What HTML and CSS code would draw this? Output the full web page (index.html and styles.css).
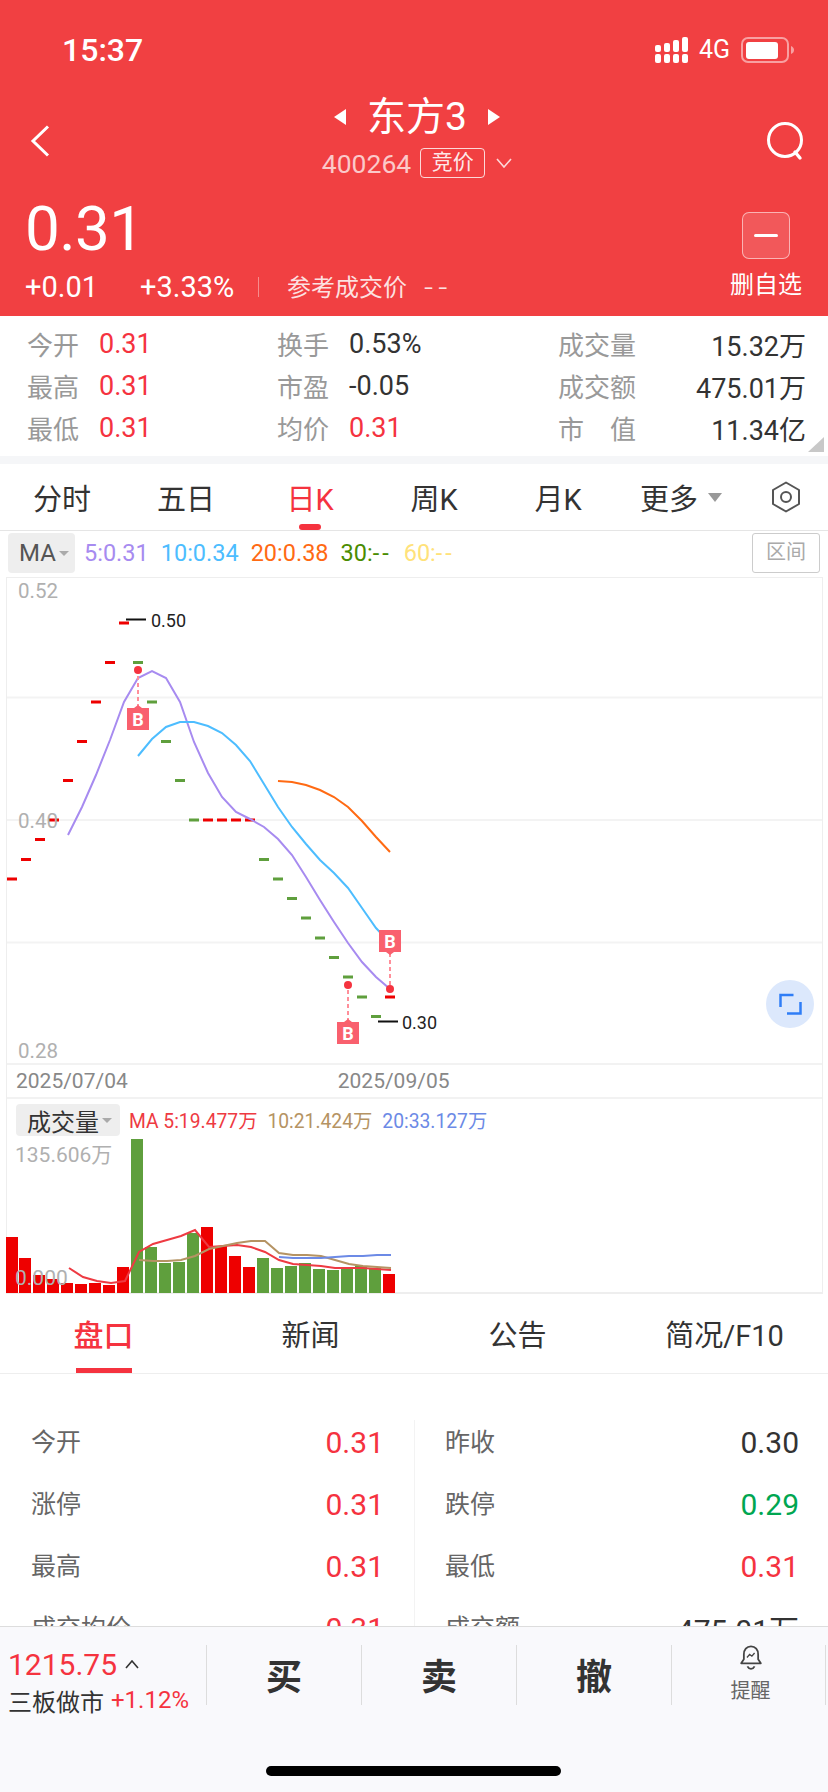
FILE: index.html
```html
<!DOCTYPE html>
<html lang="zh-CN">
<head>
    <meta charset="UTF-8">
    <meta name="viewport" content="width=device-width, initial-scale=1.0">
    <title>东方3</title>
    <link rel="stylesheet" href="styles.css">
</head>
<body>
<div class="main">

    <header class="head">
        <div class="status">
            <span class="time">15:37</span>
            <div class="status-right">
                <svg width="33" height="26" viewBox="0 0 33 26" fill="#fff">
                    <rect x="0" y="17" width="6" height="9" rx="2"/><rect x="9" y="17" width="6" height="9" rx="2"/><rect x="18" y="17" width="6" height="9" rx="2"/><rect x="27" y="17" width="6" height="9" rx="2"/>
                    <rect x="0" y="8" width="6" height="7" rx="2"/><rect x="9" y="6" width="6" height="9" rx="2"/><rect x="18" y="3" width="6" height="12" rx="2"/><rect x="27" y="0" width="6" height="15" rx="2"/>
                </svg>
                <span class="net">4G</span>
                <svg width="53" height="26" viewBox="0 0 53 26">
                    <rect x="1" y="1" width="46" height="24" rx="6" fill="none" stroke="#fff" stroke-opacity=".5" stroke-width="2"/>
                    <rect x="5" y="5" width="32" height="17" rx="3" fill="#fff"/>
                    <path d="M50 9c2 1 3 2 3 4s-1 3-3 4z" fill="#fff" fill-opacity=".5"/>
                </svg>
            </div>
        </div>

        <div class="nav">
            <svg class="back" width="20" height="32" viewBox="0 0 20 32"><path d="M18 1.500 3 16l15 14.500" fill="none" stroke="#fff" stroke-width="3"/></svg>
            <div class="nav-mid">
                <div class="title-line">
                    <span class="arrow arrow-l"></span>
                    <span class="title">东方3</span>
                    <span class="arrow arrow-r"></span>
                </div>
                <div class="code-line">
                    <span class="code">400264</span>
                    <span class="tag">竞价</span>
                    <svg width="16" height="10" viewBox="0 0 16 10"><path d="M1 1l7 8 7-8" fill="none" stroke="#fff" stroke-opacity=".8" stroke-width="1.600"/></svg>
                </div>
            </div>
            <svg class="search" width="40" height="40" viewBox="0 0 40 40"><circle cx="20" cy="19" r="16.500" fill="none" stroke="#fff" stroke-width="3"/><path d="M30 31l5 6" stroke="#fff" stroke-width="3.400" stroke-linecap="round"/></svg>
        </div>

        <div class="quote">
            <div class="quote-left">
                <div class="price">0.31</div>
                <div class="sub">
                    <span class="chg">+0.01</span>
                    <span class="pct">+3.33%</span>
                    <span class="sub-line"></span>
                    <span class="ref">参考成交价</span>
                    <span class="ref-val">--</span>
                </div>
            </div>
            <div class="fav">
                <div class="fav-btn"><span></span></div>
                <div class="fav-text">删自选</div>
            </div>
        </div>
    </header>

    <section class="stats">
        <div class="stat"><span class="lb">今开</span><span class="red">0.31</span></div>
        <div class="stat"><span class="lb">换手</span><span class="dark">0.53%</span></div>
        <div class="stat wide"><span class="lb">成交量</span><span class="dark">15.32万</span></div>
        <div class="stat"><span class="lb">最高</span><span class="red">0.31</span></div>
        <div class="stat"><span class="lb">市盈</span><span class="dark">-0.05</span></div>
        <div class="stat wide"><span class="lb">成交额</span><span class="dark">475.01万</span></div>
        <div class="stat"><span class="lb">最低</span><span class="red">0.31</span></div>
        <div class="stat"><span class="lb">均价</span><span class="red">0.31</span></div>
        <div class="stat wide"><span class="lb spread"><i>市</i><i>值</i></span><span class="dark">11.34亿</span></div>
        <span class="corner"></span>
    </section>

    <nav class="ktabs">
        <span>分时</span>
        <span>五日</span>
        <span class="on">日K</span>
        <span>周K</span>
        <span>月K</span>
        <span class="more">更多<i class="tri-big"></i></span>
        <svg width="30" height="32" viewBox="0 0 30 32" fill="none" stroke="#555" stroke-width="2"><path d="M15 1.500 28 9v14l-13 7.500L2 23V9z" stroke-linejoin="round"/><circle cx="15" cy="16" r="5"/></svg>
    </nav>

    <div class="ma-row">
        <span class="ma-btn">MA<i class="tri"></i></span>
        <span class="c-purple">5:0.31</span>
        <span class="c-blue">10:0.34</span>
        <span class="c-orange">20:0.38</span>
        <span class="c-green">30:<i class="dd">--</i></span>
        <span class="c-yellow">60:<i class="dd">--</i></span>
        <span class="range">区间</span>
    </div>

    <div class="chart">
        <svg class="kline" width="815" height="487" viewBox="7 578 815 485">
            <path class="grid" d="M7 697.500H822M7 820H822M7 942.500H822"/>
            <path class="up" d="M7 879h10M21 859.500h10M35 839.500h10M49 820h10M63 780.500h10M77 741.500h10M91 702h10M105 662.500h10M119 623h10M203 820h10M217 820h10M231 820h10M245 820h10M385 997h10"/>
            <path class="down" d="M133 662.500h10M147 702h10M161 741.500h10M175 780.500h10M189 820h10M259 859.500h10M273 879h10M287 898.500h10M301 918h10M315 938h10M329 957.500h10M343 977h10M357 997h10M371 1016.500h10"/>
            <polyline class="ma ma5" points="68,835 82,807 96,775 110,740 124,702 138,678 152,671 166,678 180,702 194,742 208,773 222,797 236,812 250,819 264,827 278,839 292,855 306,877 320,900 334,922 348,943 362,962 376,977 390,989"/>
            <polyline class="ma ma10" points="138,756 152,739 166,727 180,722 194,722 208,726 222,733 236,745 250,761 264,784 278,807 292,827 306,844 320,860 334,873 348,888 362,908 376,928 390,943"/>
            <polyline class="ma ma20" points="278,781 292,782 306,785 320,790 334,797 348,807 362,821 376,837 390,852"/>

            <path class="leader" d="M126 619.500h20M378 1021.500h20"/>
            <text class="peak" x="151" y="627">0.50</text>
            <text class="peak" x="402" y="1029">0.30</text>

            <text class="axis" x="18" y="598">0.52</text>
            <text class="axis" x="18" y="828">0.40</text>
            <text class="axis" x="18" y="1058">0.28</text>

            <path class="dash" d="M138 676v30M390 953v32M348 990v30"/>
            <circle class="dot" cx="138" cy="670" r="4"/>
            <circle class="dot" cx="390" cy="989" r="4"/>
            <circle class="dot" cx="348" cy="985" r="4"/>
            <g class="badge">
                <path d="M127 708h7l4-3 4 3h7v22h-22z"/>
                <path d="M379 930h22v22h-7l-4 3-4-3h-7z"/>
                <path d="M337 1022h7l4-3 4 3h7v22h-22z"/>
            </g>
            <text class="badge-b" x="138" y="726">B</text>
            <text class="badge-b" x="390" y="948">B</text>
            <text class="badge-b" x="348" y="1040">B</text>

            <circle cx="790" cy="1004" r="24" fill="#dce8fc"/>
            <path d="M793.500 995h-13v12M787 1013.500h13.500V1002" fill="none" stroke="#2f7df6" stroke-width="2.500"/>
        </svg>
        <div class="dates">
            <span>2025/07/04</span>
            <span>2025/09/05</span>
        </div>
        <div class="vol-head">
            <span class="vol-btn">成交量<i class="tri"></i></span>
            <span class="c-red">MA 5:19.477万</span>
            <span class="c-brown">10:21.424万</span>
            <span class="c-steel">20:33.127万</span>
        </div>
        <svg class="vol" width="815" height="157" viewBox="7 1137 815 155">
            <path class="bar-up" d="M12 1293V1237M25 1293V1258M39 1293V1275M53 1293V1279M67 1293V1283M81 1293V1284M95 1293V1283M109 1293V1285M123 1293V1267M207 1293V1227M221 1293V1246M235 1293V1256M249 1293V1267M389 1293V1274"/>
            <path class="bar-down" d="M137 1293V1139M151 1293V1247M165 1293V1263M179 1293V1262M193 1293V1233M263 1293V1258M277 1293V1268M291 1293V1266M305 1293V1263M319 1293V1269M333 1293V1270M347 1293V1268M361 1293V1266M375 1293V1268"/>
            <text class="axis axis-vol" x="15" y="1162">135.606万</text>
            <text class="axis axis-vol" x="15" y="1285">0.000</text>
            <polyline class="vline v-red" points="69,1268 83,1277 97,1281 111,1283 125,1281 139,1252 153,1244 167,1240 181,1236 195,1230 209,1247 223,1246 237,1245 251,1247 265,1252 279,1260 293,1264 307,1265 321,1266 335,1268 349,1268 363,1268 377,1269 391,1270"/>
            <polyline class="vline v-brown" points="139,1260 153,1261 167,1261 181,1260 195,1256 209,1249 223,1246 237,1243 251,1241 265,1241 279,1253 293,1255 307,1255 321,1256 335,1260 349,1264 363,1266 377,1267 391,1268"/>
            <polyline class="vline v-steel" points="279,1257 293,1258 307,1258 321,1258 335,1257 349,1256 363,1256 377,1255 391,1255"/>
        </svg>
    </div>

    <nav class="ntabs">
        <span class="on">盘口</span>
        <span>新闻</span>
        <span>公告</span>
        <span>简况/F10</span>
    </nav>

    <section class="book">
        <div class="cell"><span>今开</span><b class="red">0.31</b></div>
        <div class="cell"><span>昨收</span><b class="dark">0.30</b></div>
        <div class="cell"><span>涨停</span><b class="red">0.31</b></div>
        <div class="cell"><span>跌停</span><b class="green">0.29</b></div>
        <div class="cell"><span>最高</span><b class="red">0.31</b></div>
        <div class="cell"><span>最低</span><b class="red">0.31</b></div>
        <div class="cell"><span>成交均价</span><b class="red">0.31</b></div>
        <div class="cell"><span>成交额</span><b class="dark">475.01万</b></div>
    </section>
</div>

<footer class="bar">
    <div class="bar-row">
        <div class="index">
            <div class="index-top"><span class="index-num">1215.75</span><svg width="14" height="9" viewBox="0 0 14 9"><path d="M1 8l6-7 6 7" fill="none" stroke="#333" stroke-width="1.600"/></svg></div>
            <div class="index-sub"><span>三板做市</span><span class="index-pct">+1.12%</span></div>
        </div>
        <div class="act">买</div>
        <div class="act">卖</div>
        <div class="act">撤</div>
        <div class="act remind">
            <svg width="26" height="28" viewBox="0 0 26 28" fill="none" stroke="#444" stroke-width="2"><path d="M13 1.500c-5 0-8 4-8 9v5.500l-3 4.500h22l-3-4.500v-5.500c0-5-3-9-8-9z" stroke-linejoin="round"/><path d="M9 24c1 2 2.500 2.800 4 2.800s3-.8 4-2.800"/><path d="M8.500 14l3-3.500 2.500 2 3-3.500" stroke-width="1.500"/></svg>
            <span>提醒</span>
        </div>
    </div>
    <div class="home"></div>
</footer>
</body>
</html>
```

FILE: styles.css
```css
* {
    box-sizing: border-box;
}
body {
    margin: 0;
    width: 828px;
    height: 1792px;
    overflow: hidden;
    display: flex;
    flex-direction: column;
    background: #fff;
    color: #333;
    font-family: Roboto, "Noto Sans CJK SC", sans-serif;
}
i {
    font-style: normal;
}
svg {
    display: block;
}
.main {
    height: 1626px;
    overflow: hidden;
    flex: none;
}
.red { color: #f5333f; }
.dark { color: #333; }
.green { color: #00a651; }

/* red header */
.head {
    height: 316px;
    background: #f14042;
    color: #fff;
}
.status {
    height: 91px;
    padding: 8px 34px 0 62px;
    display: flex;
    justify-content: space-between;
    align-items: center;
}
.time {
    font-size: 32px;
    font-weight: 500;
}
.status-right {
    display: flex;
    align-items: center;
    gap: 11px;
}
.net {
    font-size: 25px;
    width: 31px;
}
.nav {
    height: 100px;
    padding: 0 23px 0 30px;
    display: flex;
    justify-content: space-between;
    align-items: center;
}
.nav-mid {
    align-self: flex-start;
    margin: 3px 0 0 19px;
}
.title-line {
    height: 46px;
    display: flex;
    justify-content: center;
    align-items: center;
    gap: 21px;
}
.title {
    font-size: 39px;
    line-height: 46px;
}
.arrow {
    width: 0;
    height: 0;
    border-top: 8px solid transparent;
    border-bottom: 8px solid transparent;
}
.arrow-l { border-right: 12px solid #fff; }
.arrow-r { border-left: 12px solid #fff; }
.code-line {
    height: 42px;
    display: flex;
    justify-content: center;
    align-items: center;
    gap: 9px;
    margin-top: 2px;
}
.code {
    font-size: 26.500px;
    color: rgba(255, 255, 255, .72);
}
.tag {
    width: 65px;
    height: 30px;
    line-height: 27px;
    border: 1px solid rgba(255, 255, 255, .8);
    border-radius: 4px;
    font-size: 21px;
    text-align: center;
    margin-right: 2px;
    color: rgba(255, 255, 255, .9);
}
.quote {
    height: 125px;
    padding: 0 26px 0 25px;
    display: flex;
    justify-content: space-between;
}
.price {
    height: 71px;
    line-height: 75px;
    font-size: 62px;
    letter-spacing: -.6px;
}
.sub {
    height: 50px;
    display: flex;
    align-items: center;
    font-size: 29px;
}
.chg {
    width: 115px;
}
.pct {
    width: 118px;
}
.sub-line {
    width: 1px;
    height: 20px;
    background: rgba(255, 255, 255, .4);
    margin-right: 28px;
}
.ref {
    font-size: 24px;
    color: rgba(255, 255, 255, .85);
    margin: -4px 17px 0 0;
}
.ref-val {
    font-size: 32px;
    font-weight: 300;
    letter-spacing: 5px;
    color: rgba(255, 255, 255, .85);
}
.fav {
    width: 72px;
    padding-top: 21px;
}
.fav-btn {
    width: 48px;
    height: 47px;
    margin: 0 auto 12px;
    border: 1px solid rgba(255, 255, 255, .55);
    border-radius: 7px;
    background: rgba(255, 255, 255, .13);
    display: flex;
    align-items: center;
    justify-content: center;
}
.fav-btn span {
    width: 24px;
    height: 3px;
    background: #fff;
    border-radius: 2px;
}
.fav-text {
    font-size: 24px;
    line-height: 28px;
    white-space: nowrap;
}

/* stats block */
.stats {
    position: relative;
    height: 148px;
    padding: 7px 22px 0 27px;
    display: grid;
    grid-template-columns: 250px 281px 248px;
    grid-auto-rows: 42px;
    border-bottom: 8px solid #f5f6f8;
}
.stat {
    display: flex;
    align-items: center;
    font-size: 27px;
}
.lb {
    width: 72px;
    color: #999;
    font-size: 26px;
    margin-top: -2px;
}
.wide {
    justify-content: space-between;
}
.wide .lb {
    width: 78px;
}
.spread {
    display: flex;
    justify-content: space-between;
}
.corner {
    position: absolute;
    left: 808px;
    top: 121px;
    width: 16px;
    height: 15px;
    background: #c8c8c8;
    clip-path: polygon(100% 0, 100% 100%, 0 100%);
}

/* k line tabs */
.ktabs {
    height: 67px;
    display: grid;
    grid-template-columns: 124px 124px 124px 124px 124px 124px 84px;
    align-items: center;
    justify-items: center;
    font-size: 29px;
    color: #333;
    border-bottom: 1px solid #e5e5e5;
}
.ktabs span {
    position: relative;
    display: flex;
    align-items: center;
    height: 66px;
}
.ktabs .on {
    color: #f5333f;
}
.ktabs .on::after {
    content: "";
    position: absolute;
    left: 50%;
    bottom: 0;
    width: 22px;
    height: 6px;
    margin-left: -11px;
    border-radius: 3px;
    background: #f5333f;
}
.more {
    margin-left: -2px;
}
.tri-big {
    margin-left: 10px;
    border-top: 9px solid #999;
    border-left: 7.500px solid transparent;
    border-right: 7.500px solid transparent;
}
.tri {
    margin-left: 3px;
    border-top: 5px solid #aaa;
    border-left: 5px solid transparent;
    border-right: 5px solid transparent;
}

/* MA row */
.ma-row {
    height: 46px;
    padding: 2px 8px 4px;
    display: flex;
    align-items: center;
    gap: 12px;
    font-size: 23.500px;
}
.dd {
    letter-spacing: 3px;
}
.ma-btn {
    width: 67px;
    height: 40px;
    padding-left: 11px;
    margin-right: -3px;
    display: flex;
    align-items: center;
    background: #eee;
    border-radius: 4px;
    color: #555;
    font-size: 24px;
}
.c-purple { color: #a78bf0; }
.c-blue { color: #4dbdff; }
.c-orange { color: #ff6a13; }
.c-green { color: #4a8c00; }
.c-yellow { color: #ffe27a; }
.c-red { color: #ee3a42; }
.c-brown { color: #b59363; }
.c-steel { color: #6c8ae6; }
.range {
    margin-left: auto;
    width: 68px;
    height: 40px;
    line-height: 37px;
    text-align: center;
    border: 1px solid #ccc;
    border-radius: 3px;
    font-size: 20px;
    color: #aaa;
}

/* chart */
.chart {
    margin: 0 5px 0 6px;
    border-left: 1px solid #eee;
    border-right: 1px solid #eee;
    border-top: 1px solid #eee;
}
.kline {
    overflow: visible;
    border-bottom: 2px solid #f2f2f2;
}
.grid {
    stroke: #f3f3f3;
    stroke-width: 2;
}
.up, .down {
    stroke-width: 3;
    fill: none;
}
.up { stroke: #ee0000; }
.down { stroke: #5f9f3d; }
.ma {
    fill: none;
    stroke-width: 2;
}
.ma5 { stroke: #a78bf0; }
.ma10 { stroke: #4dbdff; }
.ma20 { stroke: #ff6a13; }
.leader {
    stroke: #111;
    stroke-width: 2;
}
.peak {
    font-size: 18px;
    fill: #222;
}
.axis {
    font-size: 20.500px;
    fill: #b0b0b0;
}
.axis-vol {
    font-size: 21px;
}
.dash {
    stroke: #ff8f9a;
    stroke-width: 2;
    stroke-dasharray: 4 3;
}
.dot {
    fill: #f5333f;
}
.badge {
    fill: #f9606e;
}
.badge-b {
    font-size: 18px;
    font-weight: 700;
    fill: #fff;
    text-anchor: middle;
}
.dates {
    height: 34px;
    padding: 0 0 0 9px;
    display: flex;
    align-items: center;
    gap: 210px;
    font-size: 21px;
    color: #888;
    border-bottom: 2px solid #f2f2f2;
}
.vol-head {
    height: 38px;
    padding: 4px 0 0 9px;
    display: flex;
    align-items: center;
    gap: 10px;
    font-size: 19.300px;
}
.vol-btn {
    width: 104px;
    height: 32px;
    padding-left: 11px;
    margin-right: -1px;
    display: flex;
    align-items: center;
    background: #eee;
    border-radius: 4px;
    color: #333;
    font-size: 24px;
}
.vol {
    overflow: visible;
    border-bottom: 2px solid #eee;
}
.bar-up, .bar-down {
    stroke-width: 12;
    fill: none;
}
.bar-up { stroke: #ee0000; }
.bar-down { stroke: #5f9f3d; }
.vline {
    fill: none;
    stroke-width: 2;
}
.v-red { stroke: #ee3a42; }
.v-brown { stroke: #b59363; }
.v-steel { stroke: #6c8ae6; }

/* lower tabs */
.ntabs {
    height: 80px;
    display: grid;
    grid-template-columns: repeat(4, 207px);
    justify-items: center;
    font-size: 29px;
    color: #333;
    border-bottom: 1px solid #eee;
}
.ntabs span {
    position: relative;
    display: flex;
    align-items: center;
    padding-bottom: 2px;
}
.ntabs .on {
    color: #f5333f;
    font-weight: 500;
    font-size: 30px;
}
.ntabs .on::after {
    content: "";
    position: absolute;
    left: 2px;
    right: 2px;
    bottom: 0;
    height: 5px;
    background: #f5333f;
}

/* order book */
.book {
    position: relative;
    margin-top: 36px;
    display: grid;
    grid-template-columns: 414px 414px;
    grid-auto-rows: 62px;
}
.book::before {
    content: "";
    position: absolute;
    left: 414px;
    top: 10px;
    bottom: 0;
    width: 1px;
    background: #f3f3f3;
}
.cell {
    display: flex;
    align-items: center;
    justify-content: space-between;
    padding: 0 30px 0 31px;
    font-size: 25px;
    color: #666;
}
.cell span {
    margin-top: -2px;
}
.cell:nth-child(even) {
    padding: 0 29px 0 31px;
}
.cell b {
    font-weight: 400;
    font-size: 30px;
    margin-top: 2px;
}

/* bottom bar */
.bar {
    flex: 1;
    background: #f9f9fc;
    border-top: 1px solid #ddd;
    padding-top: 18px;
}
.bar-row {
    height: 60px;
    display: flex;
}
.index {
    width: 206px;
    padding-left: 8px;
    white-space: nowrap;
}
.index-top {
    height: 36px;
    margin-top: 1px;
    display: flex;
    align-items: center;
    gap: 8px;
}
.index-num {
    font-size: 30px;
    color: #f5333f;
}
.index-sub {
    height: 36px;
    display: flex;
    align-items: center;
    gap: 7px;
    font-size: 24px;
    color: #333;
}
.index-pct {
    color: #f5333f;
    font-size: 24px;
}
.act {
    width: 155px;
    padding-bottom: 2px;
    border-left: 1px solid #ddd;
    display: flex;
    align-items: center;
    justify-content: center;
    font-size: 36px;
    font-weight: 700;
    color: #333;
}
.remind {
    flex-direction: column;
    justify-content: flex-start;
    padding: 0 0 0 4px;
    border-right: 1px solid #ddd;
    font-size: 20px;
    font-weight: 400;
    color: #666;
}
.remind span {
    line-height: 28px;
    margin-top: 7px;
}
.home {
    width: 295px;
    height: 10px;
    margin: 61px 0 0 266px;
    background: #000;
    border-radius: 5px;
}
```
